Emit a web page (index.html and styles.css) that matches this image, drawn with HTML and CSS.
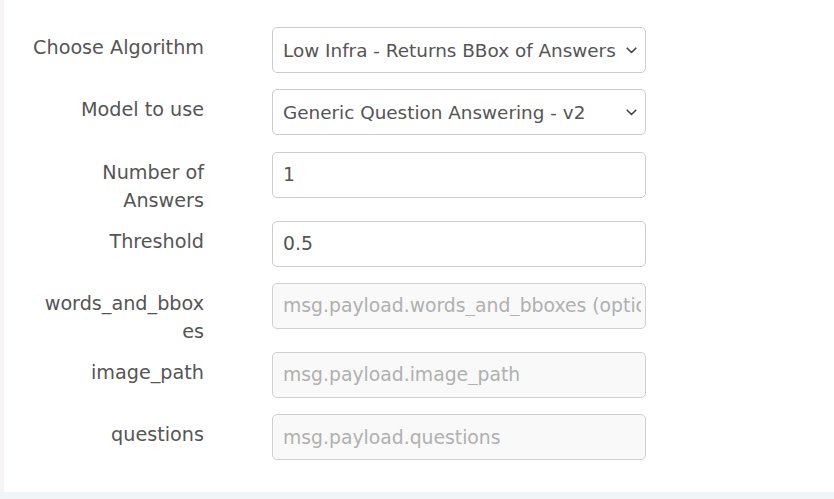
FILE: index.html
```html
<!DOCTYPE html>
<html>
<head>
<meta charset="utf-8">
<link rel="stylesheet" href="styles.css">
</head>
<body>
<div class="page">
  <div class="panel">
    <div class="row">
      <label class="lbl">Choose Algorithm</label>
      <div class="field">
        <select class="ctl sel">
          <option>Low Infra - Returns BBox of Answers</option>
        </select>
        <svg class="chev" width="11" height="7" viewBox="0 0 11 7"><path d="M1.2 1.2l4.3 4.3 4.3-4.3" fill="none" stroke="#444444" stroke-width="1.6" stroke-linecap="round" stroke-linejoin="round"/></svg>
      </div>
    </div>
    <div class="row">
      <label class="lbl">Model to use</label>
      <div class="field">
        <select class="ctl sel">
          <option>Generic Question Answering - v2</option>
        </select>
        <svg class="chev" width="11" height="7" viewBox="0 0 11 7"><path d="M1.2 1.2l4.3 4.3 4.3-4.3" fill="none" stroke="#444444" stroke-width="1.6" stroke-linecap="round" stroke-linejoin="round"/></svg>
      </div>
    </div>
    <div class="row wrap">
      <label class="lbl">Number of Answers</label>
      <div class="field"><input class="ctl" type="text" value="1"></div>
    </div>
    <div class="row">
      <label class="lbl">Threshold</label>
      <div class="field"><input class="ctl" type="text" value="0.5"></div>
    </div>
    <div class="row wrap">
      <label class="lbl">words_and_bbox<br>es</label>
      <div class="field"><input class="ctl" type="text" disabled placeholder="msg.payload.words_and_bboxes (optional)"></div>
    </div>
    <div class="row">
      <label class="lbl">image_path</label>
      <div class="field"><input class="ctl" type="text" disabled placeholder="msg.payload.image_path"></div>
    </div>
    <div class="row">
      <label class="lbl">questions</label>
      <div class="field"><input class="ctl" type="text" disabled placeholder="msg.payload.questions"></div>
    </div>
  </div>
  <div class="foot"></div>
</div>
</body>
</html>
```
FILE: styles.css
```css
html, body {
  margin: 0;
  padding: 0;
  background: #ffffff;
}
.page {
  display: flex;
  flex-direction: column;
  height: 499px;
  font-family: "DejaVu Sans", "Open Sans", sans-serif;
  font-size: 18.8px;
  color: #555555;
}
.panel {
  flex: 1;
  border-left: 4px solid #f7f5f3;
  padding-top: 27px;
  padding-left: 28px;
}
.foot {
  height: 7px;
  background: #f2f5f8;
}
.row {
  display: flex;
  align-items: flex-start;
  margin-bottom: 16.4px;
}
.lbl {
  width: 172px;
  flex: none;
  text-align: right;
  font-size: 19.2px;
  line-height: 28px;
  padding-top: 7px;
  margin-right: 68px;
  overflow-wrap: anywhere;
  color: #555555;
}
.row.wrap .lbl {
  margin-bottom: -10.6px;
}
.field {
  position: relative;
  width: 374px;
  height: 46px;
  flex: none;
}
.ctl {
  box-sizing: border-box;
  width: 100%;
  height: 46px;
  margin: 0;
  padding: 0 4px 0 10px;
  border: 1px solid #cccccc;
  border-radius: 5px;
  background: #ffffff;
  font: inherit;
  color: #555555;
  outline: none;
}
.sel {
  -webkit-appearance: none;
  appearance: none;
  font-size: 18.4px;
  padding-right: 20px;
}
.ctl:disabled {
  background: #f9f9f9;
  border-color: #d0d0d0;
}
.ctl::placeholder {
  color: #b0b0b0;
  opacity: 1;
}
.chev {
  position: absolute;
  right: 9px;
  top: 20px;
  pointer-events: none;
}
```
